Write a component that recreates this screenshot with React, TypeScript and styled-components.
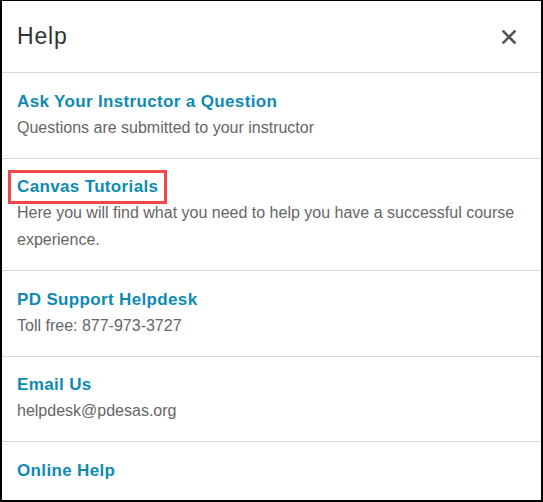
import styled, { createGlobalStyle } from "styled-components";

const GlobalStyle = createGlobalStyle`
    html, body {
        margin: 0;
        padding: 0;
        background: #fff;
    }
    body {
        font-family: "Liberation Sans", Arial, sans-serif;
    }
`;

type HelpItem = {
    title: string;
    text?: string;
    highlighted?: boolean;
};

const items: HelpItem[] = [
    { title: "Ask Your Instructor a Question", text: "Questions are submitted to your instructor" },
    {
        title: "Canvas Tutorials",
        text: "Here you will find what you need to help you have a successful course experience.",
        highlighted: true,
    },
    { title: "PD Support Helpdesk", text: "Toll free: 877-973-3727" },
    { title: "Email Us", text: "helpdesk@pdesas.org" },
    { title: "Online Help" },
];

export default function App() {
    return (
        <>
            <GlobalStyle />
            <Dialog>
                <Header>
                    <Heading>Help</Heading>
                    <CloseButton aria-label="Close">
                        <svg width="14" height="14" viewBox="0 0 14 14">
                            <path d="M1.5 1.5 L12.5 12.5 M12.5 1.5 L1.5 12.5" stroke="#555" strokeWidth="2.6" strokeLinecap="square" />
                        </svg>
                    </CloseButton>
                </Header>
                <List>
                    {items.map(item => (
                        <Item key={item.title}>
                            <Title href="#" $highlighted={item.highlighted}>
                                {item.title}
                            </Title>
                            {item.text && <Description>{item.text}</Description>}
                        </Item>
                    ))}
                </List>
            </Dialog>
        </>
    );
}

const Dialog = styled.div`
    box-sizing: border-box;
    width: 543px;
    height: 502px;
    border: 2px solid #000;
    border-top-width: 1px;
    background: #fff;
    display: flex;
    flex-direction: column;
    overflow: hidden;
`;

const Header = styled.div`
    display: flex;
    align-items: center;
    justify-content: space-between;
    height: 71px;
    padding: 0 23px 0 15px;
    border-bottom: 1px solid #d9d9d9;
    flex-shrink: 0;
`;

const Heading = styled.h2`
    margin: 0;
    font-size: 23px;
    font-weight: 400;
    letter-spacing: 0.8px;
    color: #333;
`;

const CloseButton = styled.button`
    display: flex;
    align-items: center;
    justify-content: center;
    width: 18px;
    height: 18px;
    padding: 0;
    margin-top: 1px;
    border: none;
    background: none;
    cursor: pointer;
`;

const List = styled.ul`
    margin: 0;
    padding: 0;
    list-style: none;
`;

const Item = styled.li`
    padding: 16.5px 15px 17px;
    border-bottom: 1px solid #d9d9d9;
    &:last-child {
        border-bottom: none;
    }
`;

const Title = styled.a<{ $highlighted?: boolean }>`
    display: inline-block;
    font-size: 17px;
    font-weight: 700;
    line-height: 24px;
    letter-spacing: 0.35px;
    color: #0e8ab3;
    text-decoration: none;
    ${p => p.$highlighted && `
        padding: 2px 6px;
        margin: -2px -6px;
        outline: 3px solid #f0474a;
    `}
`;

const Description = styled.p`
    margin: 0;
    font-size: 16px;
    line-height: 27px;
    color: #666;
`;
